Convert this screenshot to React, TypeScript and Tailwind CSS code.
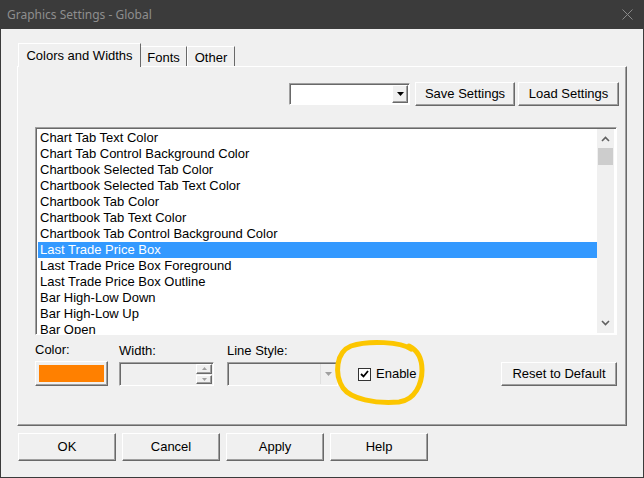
const items = [
  "Chart Tab Text Color",
  "Chart Tab Control Background Color",
  "Chartbook Selected Tab Color",
  "Chartbook Selected Tab Text Color",
  "Chartbook Tab Color",
  "Chartbook Tab Text Color",
  "Chartbook Tab Control Background Color",
  "Last Trade Price Box",
  "Last Trade Price Box Foreground",
  "Last Trade Price Box Outline",
  "Bar High-Low Down",
  "Bar High-Low Up",
  "Bar Open",
];

const raised =
  "border border-t-white border-l-white border-r-[#696969] border-b-[#696969] shadow-[inset_-1px_-1px_0_#a0a0a0] bg-[#f0f0f0]";
const sunken =
  "border border-t-[#a0a0a0] border-l-[#a0a0a0] border-r-white border-b-white shadow-[inset_1px_1px_0_#696969]";

function Button({ label, className }: { label: string; className: string }) {
  return (
    <div className={`${raised} flex items-center justify-center text-[13px] text-black ${className}`}>
      {label}
    </div>
  );
}

function DropArrow({ color }: { color: string }) {
  return (
    <svg width="7" height="4" viewBox="0 0 7 4">
      <path d="M0 0h7L3.5 4z" fill={color} />
    </svg>
  );
}

export default function App() {
  return (
    <div
      className="relative w-[644px] h-[478px] bg-[#f0f0f0] border border-t-0 border-[#3b3b3b] flex flex-col overflow-hidden"
      style={{ fontFamily: '"Liberation Sans", Arial, sans-serif' }}
    >
      {/* title bar */}
      <div className="h-[29px] bg-[#3b3b3b] flex items-center justify-between pl-[6px] pr-[10px] shrink-0">
        <span className="text-[12px] text-[#8e8e8e]" style={{ fontFamily: '"Noto Sans", sans-serif' }}>
          Graphics Settings - Global
        </span>
        <svg width="11" height="11" viewBox="0 0 11 11">
          <path d="M0.5 0.5l10 10M10.5 0.5l-10 10" stroke="#8a8a8a" strokeWidth="1" />
        </svg>
      </div>

      <div className="pl-[16px] pt-[14px] flex flex-col">
        {/* tabs */}
        <div className="flex items-end h-[23px] pl-[1px]">
          <div className="h-[24px] w-[123px] -mb-[1px] bg-[#f0f0f0] border-t border-l border-white border-r border-r-[#696969] flex items-center justify-center text-[13px] z-10 relative">
            Colors and Widths
          </div>
          <div className="h-[20px] w-[46px] border-t border-white border-r border-r-[#696969] flex items-center justify-center text-[13px] pt-[2px]">
            Fonts
          </div>
          <div className="h-[20px] w-[48px] border-t border-l border-white border-r border-r-[#696969] flex items-center justify-center text-[13px] pt-[2px]">
            Other
          </div>
        </div>

        {/* tab page */}
        <div className="w-[610px] h-[360px] border border-t-white border-l-white border-r-[#696969] border-b-[#696969] shadow-[inset_-1px_-1px_0_#a0a0a0] flex flex-col pl-[17px] pt-[15px]">
          <div className="flex items-center justify-end pr-[7px] gap-[3px]">
            <div className={`${sunken} bg-white w-[121px] h-[22px] flex justify-end items-stretch p-[1px] mr-[2px]`}>
              <div className={`${raised} w-[16px] flex items-center justify-center`}>
                <DropArrow color="#000" />
              </div>
            </div>
            <Button label="Save Settings" className="w-[100px] h-[24px]" />
            <Button label="Load Settings" className="w-[101px] h-[24px]" />
          </div>

          {/* item list */}
          <div className={`${sunken} mt-[21px] w-[582px] h-[208px] bg-white flex p-[2px] overflow-hidden`}>
            <div className="flex-1 flex flex-col">
              {items.map((it, i) => (
                <div
                  key={it}
                  className={`h-[16px] shrink-0 leading-[15px] text-[13px] pl-[2px] whitespace-nowrap ${
                    i === 7 ? "bg-[#3399ff] text-white" : "text-black"
                  }`}
                >
                  {it}
                </div>
              ))}
            </div>
            <div className="w-[17px] bg-[#f0f0f0] flex flex-col items-center -my-[1px]">
              <svg width="9" height="6" viewBox="0 0 9 6" className="mt-[7px]">
                <path d="M1 5L4.5 1.5L8 5" stroke="#606060" strokeWidth="1.6" fill="none" />
              </svg>
              <div className="w-[15px] h-[17px] bg-[#cdcdcd] mt-[6px]" />
              <div className="flex-1" />
              <svg width="9" height="6" viewBox="0 0 9 6" className="mb-[7px]">
                <path d="M1 1L4.5 4.5L8 1" stroke="#606060" strokeWidth="1.6" fill="none" />
              </svg>
            </div>
          </div>

          {/* color / width / style row */}
          <div className="flex items-end mt-[7px] text-[13px]">
            <div className="flex flex-col w-[84px]">
              <span className="leading-[16px] mb-[3px]">Color:</span>
              <div className={`${raised} w-[73px] h-[25px] p-[3px]`}>
                <div className="w-full h-full bg-[#ff8000]" />
              </div>
            </div>
            <div className="flex flex-col w-[108px]">
              <span className="leading-[16px] mb-[3px]">Width:</span>
              <div className={`${sunken} w-[95px] h-[24px] flex justify-end p-[1px]`}>
                <div className="w-[16px] flex flex-col gap-[1px]">
                  <div className={`${raised} flex-1 flex items-center justify-center`}>
                    <svg width="5" height="3" viewBox="0 0 5 3"><path d="M0 3h5L2.5 0z" fill="#a0a0a0" /></svg>
                  </div>
                  <div className={`${raised} flex-1 flex items-center justify-center`}>
                    <svg width="5" height="3" viewBox="0 0 5 3"><path d="M0 0h5L2.5 3z" fill="#a0a0a0" /></svg>
                  </div>
                </div>
              </div>
            </div>
            <div className="flex flex-col w-[132px]">
              <span className="leading-[16px] mb-[3px]">Line Style:</span>
              <div className={`${sunken} w-[111px] h-[24px] flex justify-end p-[1px]`}>
                <div className="w-[16px] bg-[#f0f0f0] flex items-center justify-center border-l border-[#e0e0e0]">
                  <DropArrow color="#a0a0a0" />
                </div>
              </div>
            </div>
            <div className="flex items-center h-[24px] -ml-[1px]">
              <div className="w-[13px] h-[13px] bg-white border border-[#333] flex items-center justify-center">
                <svg width="9" height="8" viewBox="0 0 9 8">
                  <path d="M1 4l2.5 2.5L8 1" stroke="#000" strokeWidth="1.8" fill="none" />
                </svg>
              </div>
              <span className="ml-[5px]">Enable</span>
            </div>
            <div className="flex-1" />
            <Button label="Reset to Default" className="w-[116px] h-[24px] mr-[9px]" />
          </div>
        </div>

        {/* dialog buttons */}
        <div className="flex gap-[6px] mt-[7px] pl-[1px]">
          <Button label="OK" className="w-[98px] h-[28px]" />
          <Button label="Cancel" className="w-[98px] h-[28px]" />
          <Button label="Apply" className="w-[98px] h-[28px]" />
          <Button label="Help" className="w-[98px] h-[28px]" />
        </div>
      </div>

      {/* hand-drawn highlight loop around the Enable checkbox */}
      <svg className="absolute left-0 top-0 pointer-events-none" width="644" height="478">
        <path
          d="M410 349 C400 342 368 340 350 346 C335 352 333 374 342 388 C350 399 374 404 398 402 C414 400 421 384 421 370 C421 358 416 350 408 346"
          stroke="#fcc600"
          strokeWidth="5"
          fill="none"
          strokeLinecap="round"
        />
      </svg>
    </div>
  );
}
